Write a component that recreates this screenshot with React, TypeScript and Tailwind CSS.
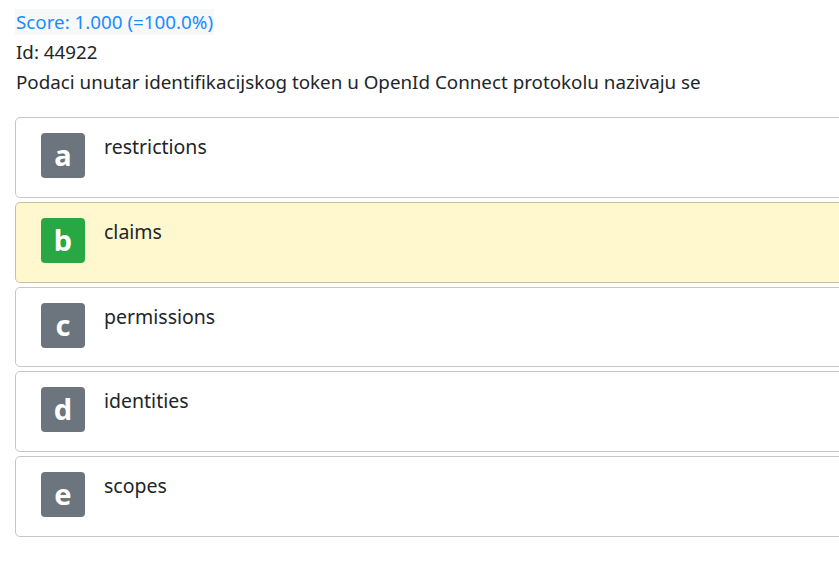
import React from 'react';

const options = [
  { letter: 'a', text: 'restrictions', correct: false },
  { letter: 'b', text: 'claims', correct: true },
  { letter: 'c', text: 'permissions', correct: false },
  { letter: 'd', text: 'identities', correct: false },
  { letter: 'e', text: 'scopes', correct: false },
];

export default function App() {
  return (
    <div
      className="w-[839px] h-[587px] overflow-hidden bg-white text-[#212529]"
      style={{ fontFamily: '"Noto Sans", "Open Sans", sans-serif' }}
    >
      <div className="w-[880px] pl-[15px] pt-[7px]">
        <div className="text-[18.8px] leading-[30px]">
          <span className="bg-[#f6f8fa] text-[#1a8cff] pl-px pr-px">Score: 1.000 (=100.0%)</span>
        </div>
        <div className="text-[18.8px] leading-[30px] pl-px">Id: 44922</div>
        <div className="text-[18.8px] leading-[30px] pl-px">
          Podaci unutar identifikacijskog token u OpenId Connect protokolu nazivaju se
        </div>
        <div className="mt-[20px] flex flex-col gap-[4px]">
          {options.map((o) => (
            <div
              key={o.letter}
              className={`flex items-start h-[80.75px] rounded-[5px] border pl-[25px] pt-[15px] ${
                o.correct ? 'bg-[#fff8cf] border-[#c9c39c]' : 'bg-white border-[#c6c6c6]'
              }`}
            >
              <div
                className={`w-[44px] h-[45px] rounded-[4px] flex items-center justify-center text-white font-bold text-[29px] leading-none pb-[2px] ${
                  o.correct ? 'bg-[#28a745]' : 'bg-[#6c757d]'
                }`}
              >
                {o.letter}
              </div>
              <div className="ml-[19px] text-[19.5px] leading-[30px] -mt-[1px]">{o.text}</div>
            </div>
          ))}
        </div>
      </div>
    </div>
  );
}
